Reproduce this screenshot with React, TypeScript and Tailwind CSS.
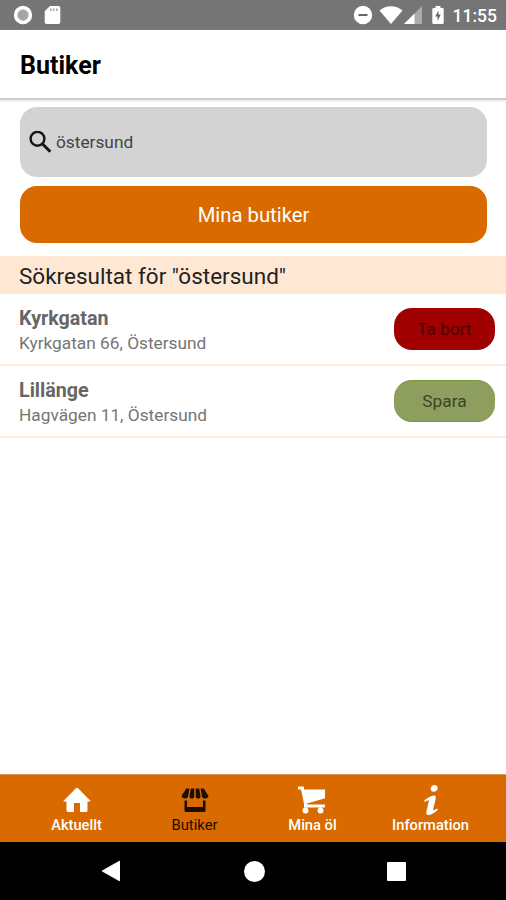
import type { ReactNode } from 'react';

interface Store {
  name: string;
  address: string;
  saved: boolean;
}

const STORES: Store[] = [
  { name: 'Kyrkgatan', address: 'Kyrkgatan 66, Östersund', saved: true },
  { name: 'Lillänge', address: 'Hagvägen 11, Östersund', saved: false },
];

const TABS = [
  {
    label: 'Aktuellt',
    path: 'M18.672 11H17v6c0 .445-.194 1-1 1h-4v-6H8v6H4c-.806 0-1-.555-1-1v-6H1.328c-.598 0-.47-.324-.06-.748L9.292 2.22c.195-.202.451-.302.708-.312.257.01.513.109.708.312l8.023 8.031c.411.425.539.749-.059.749z',
  },
  {
    label: 'Butiker',
    path: 'M4.2 2.4H6.3L5.4 7.7C5.2 9.5 1 9.6 1 7.4ZM7.2 2.4H9.5V7.7C9.5 9.5 6.2 9.5 6.3 7.7ZM10.5 2.4H12.8L13.7 7.7C13.8 9.5 10.5 9.5 10.5 7.7ZM13.7 2.4H15.8L19 7.4C19 9.6 14.8 9.5 14.6 7.7ZM3 10.3H4.7V14.6H15.3V10.3H17V17C17 17.6 16.6 18 16 18H4C3.4 18 3 17.6 3 17Z',
  },
  {
    label: 'Mina öl',
    path: 'M13 17a2 2 0 1 0 3.999.001A2 2 0 0 0 13 17zm-10 0a2 2 0 1 0 3.999.001A2 2 0 0 0 3 17zm3.547-4.828L17.615 9.01A.564.564 0 0 0 18 8.5V3H4V1.4c0-.22-.181-.4-.399-.4H.399A.401.401 0 0 0 0 1.4V3h2l1.91 8.957.09.943v1.649c0 .219.18.4.4.4h13.2c.22 0 .4-.181.4-.4V13H6.752c-1.15 0-1.174-.551-.205-.828z',
  },
  {
    label: 'Information',
    path: 'M12.432 0c1.34 0 2.01.912 2.01 1.957 0 1.305-1.164 2.512-2.679 2.512-1.269 0-2.009-.75-1.974-1.99C9.789 1.436 10.67 0 12.432 0zM8.309 20c-1.058 0-1.833-.652-1.093-3.524l1.214-5.092c.211-.814.246-1.141 0-1.141-.317 0-1.689.562-2.502 1.117l-.528-.88c2.572-2.186 5.531-3.467 6.801-3.467 1.057 0 1.233 1.273.705 3.23l-1.391 5.352c-.246.945-.141 1.271.106 1.271.317 0 1.357-.392 2.379-1.207l.6.814C12.098 19.02 9.365 20 8.309 20z',
  },
];

function StatusIcon({ width, height, children }: { width: number; height: number; children: ReactNode }) {
  return (
    <svg width={width} height={height} viewBox={`0 0 ${width} ${height}`} fill="#fff" className="shrink-0">
      {children}
    </svg>
  );
}

function StatusBar() {
  return (
    <div className="flex h-[30px] shrink-0 items-center bg-[#757575] pr-[9px] pl-[13px] text-white">
      <StatusIcon width={20} height={20}>
        <circle cx="10" cy="10" r="9.2" />
        <circle cx="10" cy="10" r="5.3" fill="#a3a3a3" stroke="#b8b8b8" />
      </StatusIcon>
      <div className="ml-[11px]">
        <StatusIcon width={17} height={20}>
          <path d="M6 1h8.5A1.8 1.8 0 0 1 16.3 2.8v14.4a1.8 1.8 0 0 1-1.8 1.8h-12A1.8 1.8 0 0 1 .7 17.2V6.3z" />
          <path d="M6 3.5h1.6v2.500H6zM9 3.500h1.600v2.500H9zM12 3.500h1.600v2.500H12z" fill="#aaa" />
        </StatusIcon>
      </div>
      <div className="ml-auto flex items-center">
        <StatusIcon width={20} height={20}>
          <circle cx="10" cy="10" r="9.200" />
          <path d="M5.500 9h9v2h-9z" fill="#666" />
        </StatusIcon>
        <div className="ml-[6px]">
          <StatusIcon width={24} height={20}>
            <path d="M.5 5.500C7-.2 17-.2 23.500 5.500L12 19z" />
          </StatusIcon>
        </div>
        <div className="ml-px">
          <StatusIcon width={18} height={20}>
            <path d="M18 1v18H0z" opacity=".4" />
            <path d="M10.500 8.500V19H0z" />
          </StatusIcon>
        </div>
        <div className="ml-[10px]">
          <StatusIcon width={12} height={20}>
            <path d="M3.500 1h5v2h2A1.300 1.300 0 0 1 11.700 4.300v13.400a1.300 1.300 0 0 1-1.300 1.300H1.600A1.300 1.300 0 0 1 .3 17.700V4.300A1.300 1.300 0 0 1 1.600 3h1.900z" />
            <path d="M6.500 5.500v4h2.300l-3.300 6.500v-4.500H3.200z" fill="#666" />
          </StatusIcon>
        </div>
        <span className="ml-[8px] w-[45px] pt-[2px] text-right text-[17.500px] leading-[22px] font-medium">11:55</span>
      </div>
    </div>
  );
}

function StoreRow({ store }: { store: Store }) {
  return (
    <li className="flex h-[72px] items-center justify-between border-b-2 border-[#feebdc] pr-[11px] pl-[19px]">
      <div className="pt-[3px]">
        <div className="text-[19.700px] leading-[25px] font-bold text-[#666]">{store.name}</div>
        <div className="text-[17.280px] leading-[25px] text-[#757575]">{store.address}</div>
      </div>
      {store.saved ? (
        <button className="h-[42px] w-[101px] rounded-[18px] bg-[#a00000] pt-[2px] text-[17.300px] text-[#500000]">Ta bort</button>
      ) : (
        <button className="h-[42px] w-[101px] rounded-[18px] border-y border-[#7c9636] bg-[#8d9e5e] pt-[2px] text-[17.300px] text-[#3c4528]">Spara</button>
      )}
    </li>
  );
}

function TabBar({ active }: { active: string }) {
  return (
    <nav className="flex h-[68px] shrink-0 border-t border-[#dc9557] bg-[#d96a00] pl-[17.500px]">
      {TABS.map((t) => (
        <button key={t.label} className={`flex w-[118px] shrink-0 flex-col items-center pt-[10px] ${t.label === active ? 'text-[#1c0e00]' : 'text-white'}`}>
          <svg width="30" height="30" viewBox="0 0 20 20" fill="currentColor">
            <path d={t.path} />
          </svg>
          <span className={`leading-[21px] ${t.label === active ? 'text-[14.800px] font-normal' : 'text-[14.700px] font-medium'}`}>{t.label}</span>
        </button>
      ))}
    </nav>
  );
}

function SystemNav() {
  return (
    <div className="flex h-[58px] shrink-0 items-center justify-between bg-black pr-[100px] pl-[101px]">
      <svg width="20" height="22" viewBox="0 0 20 22" fill="#fff"><path d="M18.500 1.200v19.600L1.200 11z" stroke="#fff" strokeLinejoin="round" /></svg>
      <div className="size-[21px] rounded-full bg-white" />
      <div className="size-[19px] rounded-[1px] bg-white" />
    </div>
  );
}

export default function App() {
  return (
    <div className="flex h-[900px] w-[506px] flex-col overflow-hidden bg-white font-[Roboto,sans-serif]">
      <StatusBar />
      <header className="flex h-[70px] shrink-0 items-center border-b-2 border-[#cdcdcd] pt-[4px] pl-5 shadow-[0_1px_2px_#e5e5e5]">
        <h1 className="text-[25px] leading-8 font-bold text-black">Butiker</h1>
      </header>
      <main className="min-h-0 flex-1">
        <div className="px-5 pt-[7px] pr-[19px]">
          <div className="flex h-[70px] items-center rounded-[17px] bg-[#d3d3d3] pl-[9px]">
            <svg width="23" height="23" viewBox="0 0 23 23" fill="none" stroke="#151515" strokeWidth="2.400">
              <circle cx="8.500" cy="7.800" r="6.900" />
              <path d="M13.300 12.800l8 8" strokeWidth="3" />
            </svg>
            <span className="ml-1 pt-[2px] text-[17.300px] text-[#444]">östersund</span>
          </div>
          <button className="mt-[9px] h-[57px] w-full rounded-[17px] bg-[#d96a00] pt-px text-[20.300px] text-white">Mina butiker</button>
        </div>
        <h2 className="mt-[13px] h-[38px] bg-[#fee8d3] pt-px pl-[19px] text-[22.500px] leading-[38px] text-[#222]">Sökresultat för "östersund"</h2>
        <ul>
          {STORES.map((s) => (
            <StoreRow key={s.name} store={s} />
          ))}
        </ul>
      </main>
      <TabBar active="Butiker" />
      <SystemNav />
    </div>
  );
}
